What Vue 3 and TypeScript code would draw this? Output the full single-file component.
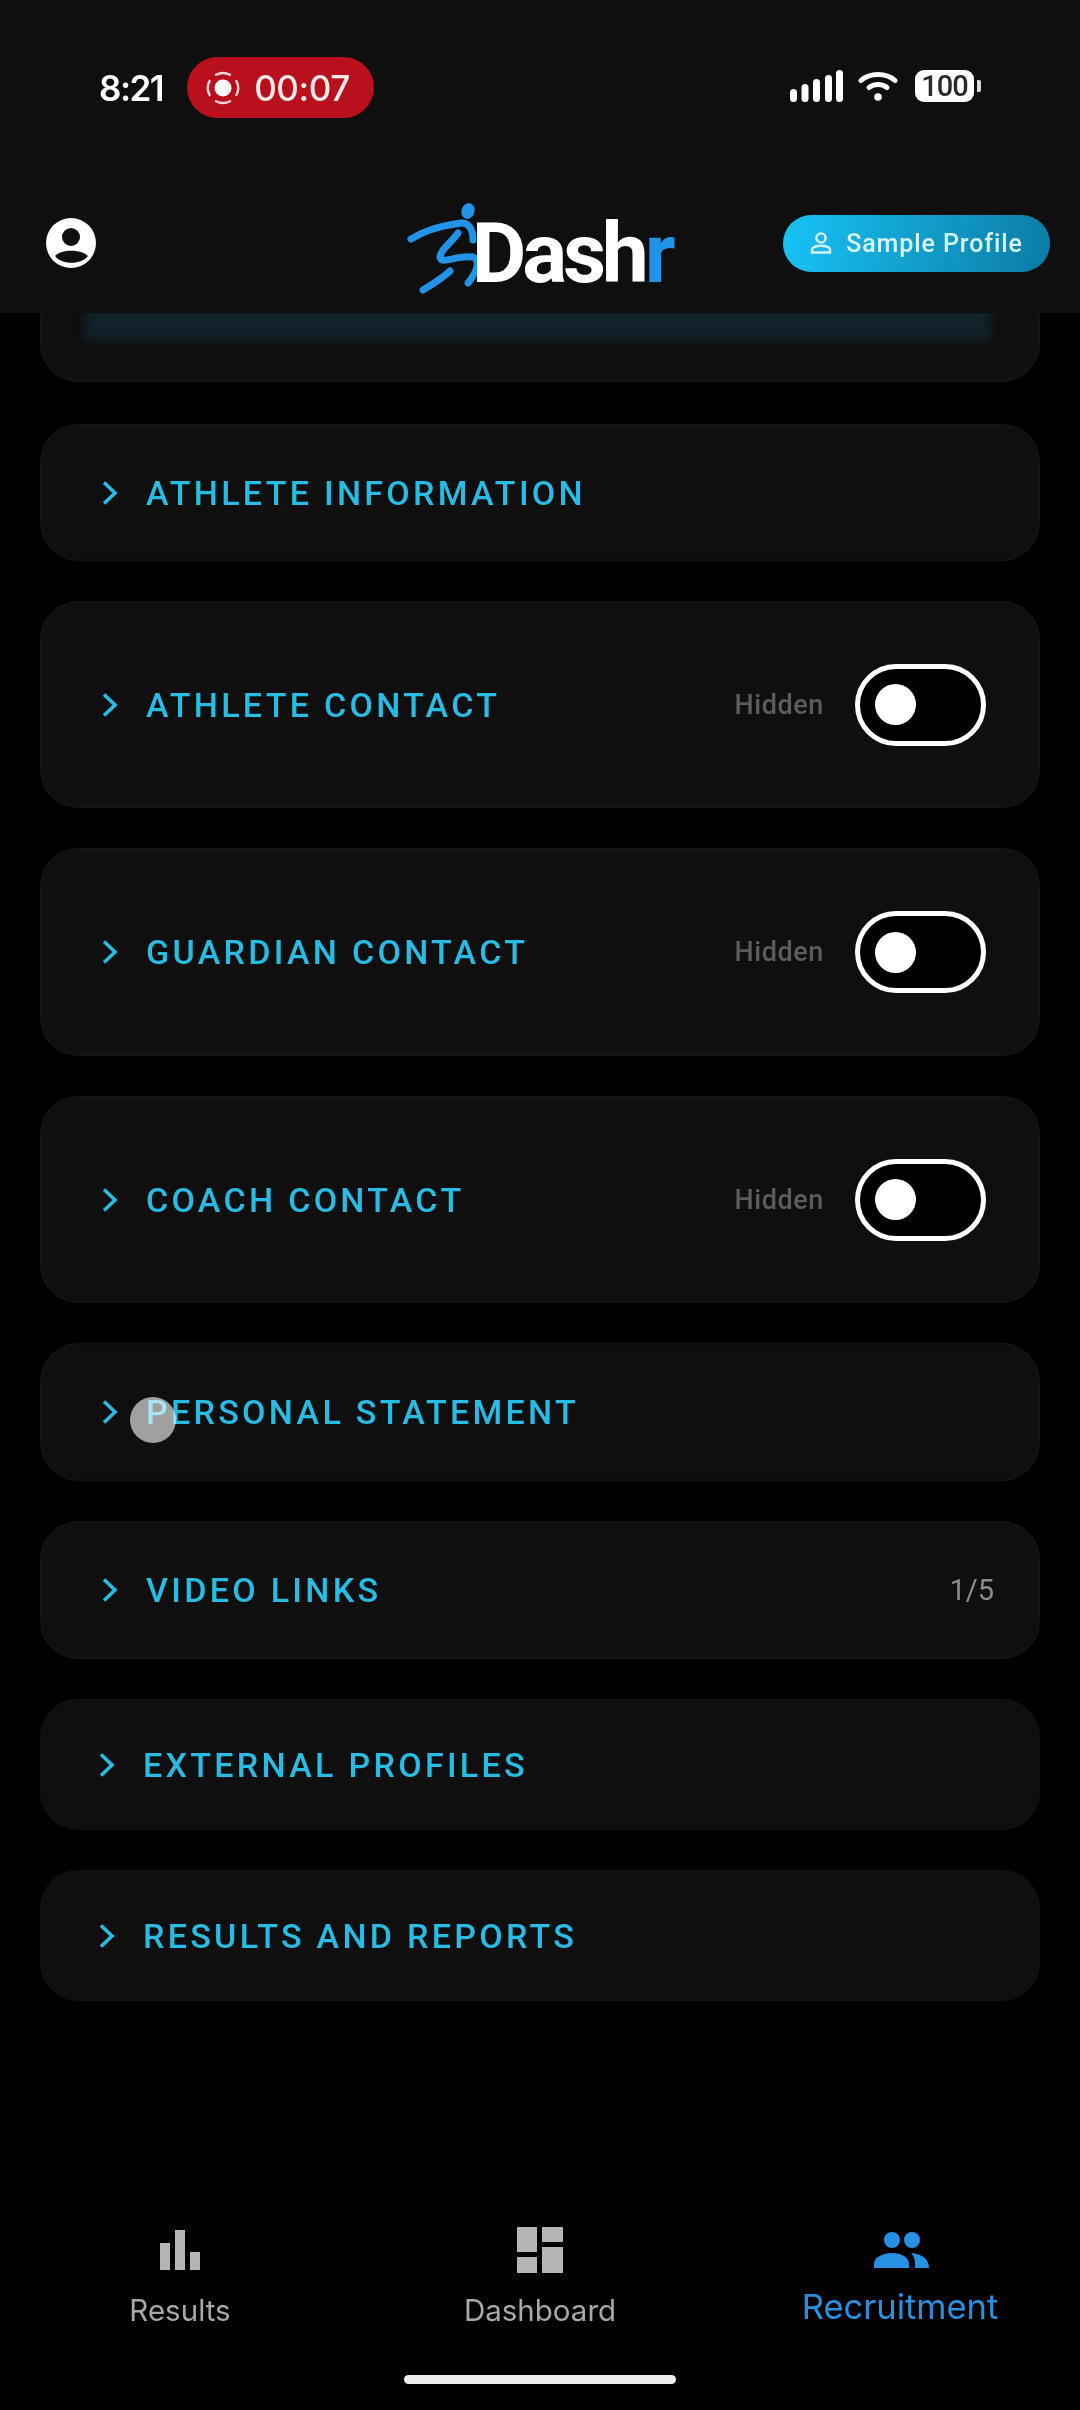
<template>
  <div class="screen">
    <header class="top">
      <div class="status">
        <div class="status-left">
          <span class="clock">8:21</span>
          <span class="rec">
            <svg class="rec-icon" viewBox="0 0 34 34">
              <circle cx="17" cy="17" r="8.5" fill="#fff" />
              <g fill="none" stroke="#fbd5d8" stroke-width="2.4" stroke-linecap="round">
                <path d="M10 3.800A15 15 0 0 1 24 3.800" />
                <path d="M30.400 10A15 15 0 0 1 30.400 24" />
                <path d="M24 30.200A15 15 0 0 1 10 30.200" />
                <path d="M3.600 24A15 15 0 0 1 3.600 10" />
              </g>
            </svg>
            00:07
          </span>
        </div>
        <div class="status-right">
          <svg class="signal" viewBox="0 0 53 32" fill="#fff">
            <rect x="0" y="19" width="7" height="13" rx="3.500" />
            <rect x="11.500" y="14" width="7" height="18" rx="3.500" />
            <rect x="23" y="9" width="7" height="23" rx="3.500" />
            <rect x="35" y="5" width="7" height="27" rx="3.500" />
            <rect x="46" y="0" width="7" height="32" rx="3.500" />
          </svg>
          <svg class="wifi" viewBox="0 0 40 30" fill="none" stroke="#fff" stroke-width="5" stroke-linecap="round">
            <path d="M3 9.500C12 1.500 28 1.500 37 9.500" />
            <path d="M11 16.500C16 12.500 24 12.500 29 16.500" />
            <circle cx="20" cy="26" r="3.800" fill="#fff" stroke="none" />
          </svg>
          <span class="battery">100</span>
          <span class="battery-tip" />
        </div>
      </div>
      <div class="brand-row">
        <svg class="account" viewBox="0 0 50 50">
          <circle cx="25" cy="25" r="25" fill="#fff" />
          <circle cx="25" cy="19" r="9" fill="#0f0f10" />
          <path d="M9 38C15 31 35 31 42 38C36 47 15 47 9 38Z" fill="#0f0f10" />
        </svg>
        <div class="logo">
          <svg class="runner" viewBox="0 0 72 96" fill="none" stroke="#2194e8" stroke-width="7" stroke-linecap="round">
            <ellipse cx="61" cy="11" rx="6.500" ry="8" transform="rotate(20 61 11)" fill="#2194e8" stroke="none" />
            <path d="M4 39C14 33 26 27 54 23C62 22 66 30 66 40" />
            <path d="M51 33C45 42 33 50 33 57C34 65 50 55 66 57C74 60 70 72 61 83" />
            <path d="M43 71C36 78 26 84 16 90" />
          </svg>
          <span class="logo-text">Dash<b>r</b></span>
        </div>
        <button class="sample">
          <svg class="sample-icon" viewBox="0 0 22 22" fill="none" stroke="#d6f5ff" stroke-width="2.400">
            <circle cx="11" cy="6" r="4.600" />
            <path d="M2 20.500V17.500C2 15.500 6 13.800 11 13.800C16 13.800 20 15.500 20 17.500V20.500Z" />
          </svg>
          Sample Profile
        </button>
      </div>
    </header>

    <main class="list">
      <div class="card card-cut">
        <div class="glow" />
      </div>
      <section
        v-for="row in rows"
        :key="row.title"
        class="card"
        :class="{ 'card-tight': row.tight }"
        :style="{ height: row.height + 'px' }"
      >
        <svg class="chevron" viewBox="0 0 16 24" fill="none" stroke="#28bbe3" stroke-width="3.600">
          <path d="M2 1.500L13 12L2 22.500" />
        </svg>
        <span class="title">{{ row.title }}</span>
        <span v-if="row.count" class="count">{{ row.count }}</span>
        <template v-if="row.toggle">
          <span class="hidden-label">Hidden</span>
          <span class="toggle"><span class="knob" /></span>
        </template>
        <span v-if="row.touch" class="touch" />
      </section>
    </main>

    <nav class="tabs">
      <div class="tab">
        <div class="tab-icon">
          <svg class="ic-bars" viewBox="0 0 40 40" fill="#b5b5b5">
            <rect x="0" y="13" width="10" height="27" />
            <rect x="15" y="0" width="10" height="40" />
            <rect x="30" y="22" width="10" height="18" />
          </svg>
        </div>
        <span class="tab-label">Results</span>
      </div>
      <div class="tab">
        <div class="tab-icon">
          <svg class="ic-dash" viewBox="0 0 46 46" fill="#b5b5b5">
            <rect x="0" y="0" width="20" height="25" />
            <rect x="25" y="0" width="21" height="15" />
            <rect x="25" y="20" width="21" height="26" />
            <rect x="0" y="30" width="20" height="16" />
          </svg>
        </div>
        <span class="tab-label">Dashboard</span>
      </div>
      <div class="tab tab-active">
        <div class="tab-icon">
          <svg class="ic-people" viewBox="0 0 57 36" fill="#2491e3">
            <circle cx="20" cy="8" r="8" />
            <circle cx="40" cy="8" r="8" />
            <path d="M2 36V32C2 25 11 21 20 21C29 21 37 25 37 32V36Z" />
            <path d="M39 21C50 22 57 27 57 36H43V32C43 28 42 24 39 21Z" />
          </svg>
        </div>
        <span class="tab-label">Recruitment</span>
      </div>
    </nav>
    <div class="home-bar" />
  </div>
</template>

<script setup lang="ts">
interface Row {
  title: string
  height: number
  toggle?: boolean
  count?: string
  tight?: boolean
  touch?: boolean
}

const rows: Row[] = [
  { title: 'ATHLETE INFORMATION', height: 137 },
  { title: 'ATHLETE CONTACT', height: 207, toggle: true },
  { title: 'GUARDIAN CONTACT', height: 208, toggle: true },
  { title: 'COACH CONTACT', height: 207, toggle: true },
  { title: 'PERSONAL STATEMENT', height: 138, touch: true },
  { title: 'VIDEO LINKS', height: 138, count: '1/5' },
  { title: 'EXTERNAL PROFILES', height: 131, tight: true },
  { title: 'RESULTS AND REPORTS', height: 131, tight: true }
]
</script>

<style>
html,
body {
  background: #000;
}
</style>

<style scoped>
.screen {
  position: relative;
  width: 1080px;
  height: 2410px;
  background: #000;
  display: flex;
  flex-direction: column;
  overflow: hidden;
  font-family: Roboto, 'Liberation Sans', sans-serif;
}

.top {
  height: 313px;
  background: #0f0f10;
  flex: none;
}

.status {
  height: 175px;
  padding: 57px 99px 0 99px;
  box-sizing: border-box;
  display: flex;
  justify-content: space-between;
  align-items: flex-start;
}

.status-left {
  display: flex;
  align-items: center;
  gap: 24px;
  height: 61px;
}

.clock {
  color: #fff;
  font-size: 35px;
  font-weight: 600;
  font-family: Inter, Roboto, sans-serif;
  letter-spacing: -1.5px;
}

.rec {
  width: 187px;
  height: 61px;
  border-radius: 31px;
  background: #b9101d;
  color: #fbe9ea;
  display: flex;
  align-items: center;
  gap: 14px;
  padding-left: 19px;
  box-sizing: border-box;
  font-size: 35px;
  font-weight: 500;
  font-family: Inter, Roboto, sans-serif;
  letter-spacing: -0.4px;
}

.rec-icon {
  width: 34px;
  height: 34px;
}

.status-right {
  display: flex;
  align-items: center;
  height: 60px;
  margin-top: -1px;
}

.signal {
  width: 53px;
  height: 32px;
  margin-right: 15px;
}

.wifi {
  width: 40px;
  height: 30px;
  margin-right: 17px;
}

.battery {
  width: 59px;
  height: 32px;
  border-radius: 9px;
  background: #fff;
  color: #2a2a2a;
  font-size: 29px;
  line-height: 32px;
  text-align: center;
  font-weight: 500;
  letter-spacing: -1px;
}

.battery-tip {
  width: 4px;
  height: 12px;
  margin-left: 3px;
  border-radius: 0 2px 2px 0;
  background: #ddd;
}

.brand-row {
  display: grid;
  grid-template-columns: 1fr auto 1fr;
  align-items: center;
  padding: 0 30px 0 46px;
  height: 136px;
}

.account {
  width: 50px;
  height: 50px;
}

.logo {
  display: flex;
  align-items: center;
  height: 96px;
  margin: 10px 18px 0 0;
}

.runner {
  width: 72px;
  height: 96px;
  margin-right: -7px;
}

.logo-text {
  color: #fff;
  font-size: 84px;
  font-weight: 700;
  letter-spacing: -4.2px;
  line-height: 96px;
  margin-top: 12px;
}

.logo-text b {
  color: #2194e8;
  font-weight: 700;
}

.sample {
  justify-self: end;
  width: 267px;
  height: 57px;
  border: 0;
  border-radius: 29px;
  background: linear-gradient(100deg, #17c3f5, #0c7ba4);
  color: #d6f5ff;
  font-family: Roboto, sans-serif;
  font-size: 25px;
  font-weight: 500;
  letter-spacing: 0.9px;
  display: flex;
  align-items: center;
  justify-content: center;
  gap: 14px;
  padding: 0;
}

.sample-icon {
  width: 22px;
  height: 22px;
}

.list {
  flex: 1;
  display: flex;
  flex-direction: column;
  gap: 40px;
  padding: 0 40px;
}

.card {
  position: relative;
  flex: none;
  display: flex;
  align-items: center;
  box-sizing: border-box;
  padding: 0 52px 0 60px;
  background: #0f0f10;
  border: 2px solid #131314;
  border-radius: 38px;
}

.card-tight {
  padding-left: 57px;
  border-color: #101011;
}

.card-cut {
  height: 69px;
  border-top: 0;
  border-radius: 0 0 38px 38px;
  padding: 0;
  align-items: flex-start;
  margin-bottom: 2px;
  overflow: hidden;
}

.glow {
  width: 906px;
  height: 33px;
  margin: -6px 0 0 43px;
  background: #12222a;
  filter: blur(5px);
}

.chevron {
  width: 16px;
  height: 24px;
  flex: none;
  margin-right: 28px;
}

.title {
  flex: 1;
  color: #28bbe3;
  font-size: 34px;
  font-weight: 500;
  letter-spacing: 3.3px;
  white-space: nowrap;
}

.count {
  color: #8c8c8c;
  font-size: 29px;
  margin-right: -8px;
}

.hidden-label {
  color: #5c5c5c;
  font-size: 27px;
  font-weight: 500;
  margin-right: 31px;
  letter-spacing: 0.6px;
}

.toggle {
  width: 131px;
  height: 82px;
  box-sizing: border-box;
  border: 5px solid #fff;
  border-radius: 41px;
  background: #000;
  display: flex;
  align-items: center;
  padding-left: 15px;
}

.knob {
  width: 41px;
  height: 41px;
  border-radius: 50%;
  background: #fff;
}

.touch {
  position: absolute;
  left: 88px;
  top: 52px;
  width: 46px;
  height: 46px;
  border-radius: 50%;
  background: #9a9a9a;
  mix-blend-mode: screen;
}

.tabs {
  flex: none;
  height: 183px;
  display: grid;
  grid-template-columns: repeat(3, 1fr);
}

.tab {
  display: flex;
  flex-direction: column;
  align-items: center;
  color: #a8a8a8;
}

.tab-icon {
  height: 46px;
  display: flex;
  align-items: center;
}

.tab-label {
  font-family: Inter, Roboto, sans-serif;
  font-size: 29.500px;
  line-height: 40px;
  margin-top: 17px;
}

.tab-active {
  color: #2a8fdc;
}

.tab-active .tab-label {
  font-size: 34.500px;
  margin-top: 14px;
}

.ic-bars {
  width: 40px;
  height: 40px;
}

.ic-dash {
  width: 46px;
  height: 46px;
}

.ic-people {
  width: 57px;
  height: 36px;
}

.home-bar {
  position: absolute;
  left: 404px;
  bottom: 26px;
  width: 272px;
  height: 9px;
  border-radius: 5px;
  background: #eee;
}
</style>
